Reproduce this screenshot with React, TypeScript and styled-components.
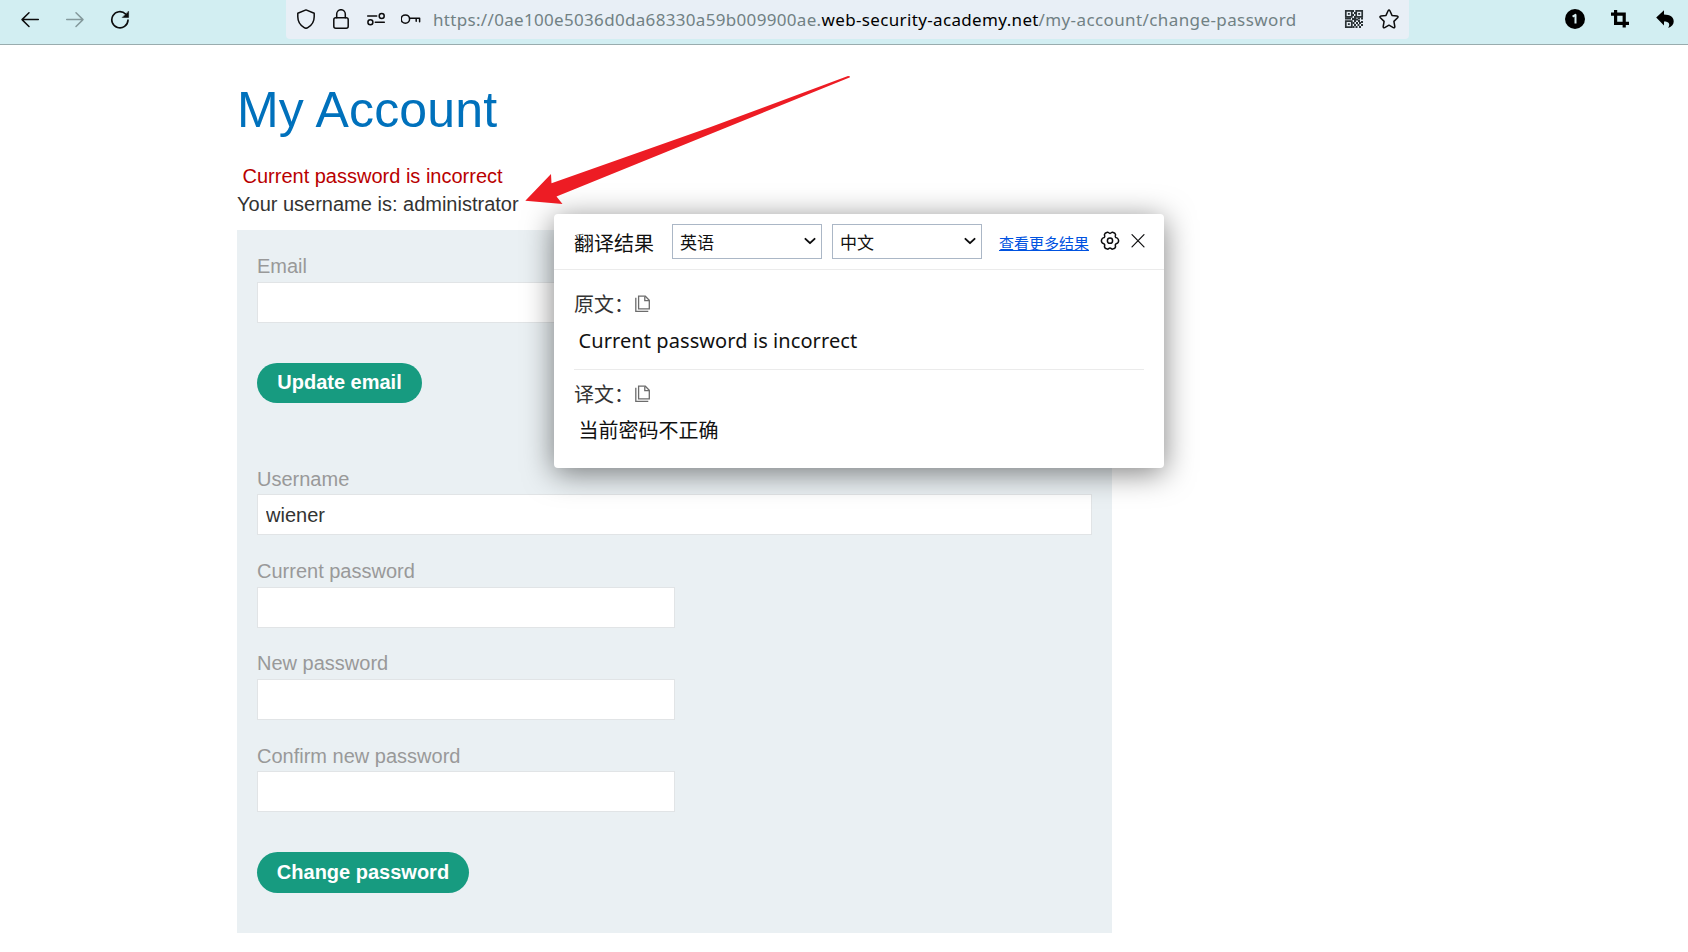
import React from "react";
import styled, { createGlobalStyle } from "styled-components";

const GlobalStyle = createGlobalStyle`
  * { box-sizing: border-box; }
  body {
    margin: 0;
    background: #fff;
    color: #333332;
    font-family: "Liberation Sans", Arial, sans-serif;
    font-size: 20px;
    line-height: 28px;
    overflow: hidden;
  }
`;

const Page = styled.div`
  position: relative;
  width: 1688px;
  height: 952px;
  overflow: hidden;
`;

const Toolbar = styled.header`
  display: flex;
  align-items: flex-start;
  height: 45px;
  background: #d2eef2;
  border-bottom: 1px solid #99acae;
`;

const NavButtons = styled.nav`
  display: flex;
  gap: 25px;
  width: 286px;
  padding: 10px 0 0 20px;
`;

const Icon = styled.svg<{ $dim?: boolean }>`
  display: block;
  flex: none;
  width: 20px;
  height: 20px;
  fill: none;
  stroke: ${(p) => (p.$dim ? "#84999c" : "#0c0c0d")};
  stroke-width: 1.5;
  stroke-linecap: round;
  stroke-linejoin: round;
`;

const CloseIcon = styled(Icon)`
  margin-left: 8px;
`;

const AddressBar = styled.div`
  display: flex;
  width: 1123px;
  height: 39px;
  padding: 9px 10px 0 10px;
  background: #e8eff6;
  border-radius: 0 0 4px 4px;
`;

const AddressIcons = styled.div`
  display: flex;
  gap: 15px;
  width: 137px;
`;

const Url = styled.div`
  display: flex;
  flex: 1;
  margin-top: -2px;
  font-family: "Noto Sans", sans-serif;
  font-size: 17px;
  line-height: 26px;
  white-space: nowrap;
`;

const UrlPart = styled.span<{ $strong?: boolean; $width: number; $tracking: number }>`
  width: ${(p) => p.$width}px;
  color: ${(p) => (p.$strong ? "#000" : "#718184")};
  letter-spacing: ${(p) => p.$tracking}px;
`;

const PageActions = styled.div`
  display: flex;
  gap: 15px;
`;

const Extensions = styled.div`
  display: flex;
  gap: 25px;
  margin-left: auto;
  padding: 9px 13px 0 0;
`;

const Main = styled.main`
  width: 875px;
  margin-left: 237px;
  padding-top: 35px;
`;

const Title = styled.h1`
  margin: 0 0 22px;
  color: #0071bc;
  font-size: 50px;
  font-weight: 400;
  line-height: 60px;
  letter-spacing: 0.2px;
`;

const Warning = styled.p`
  margin: 0;
  padding-left: 5.5px;
  color: #b90000;
`;

const UserLine = styled.p`
  margin: 0 0 12px;
`;

const Forms = styled.section`
  display: flex;
  flex-direction: column;
  height: 703px;
  padding: 22px 20px 40px;
  background: #eaf0f3;
`;

const Form = styled.form<{ $after?: number }>`
  margin: 0 0 ${(p) => p.$after ?? 0}px;
`;

const Field = styled.label<{ $gap: number; $after: number }>`
  display: flex;
  flex-direction: column;
  gap: ${(p) => p.$gap}px;
  margin-bottom: ${(p) => p.$after}px;
  color: #999;
`;

const Input = styled.input<{ $narrow?: boolean }>`
  width: ${(p) => (p.$narrow ? "418px" : "100%")};
  height: 41px;
  padding: 2px 8px 0;
  border: 1px solid #e1e4e6;
  border-radius: 0;
  outline: none;
  background: #fff;
  color: #333332;
  font: 20px "Liberation Sans", Arial, sans-serif;
`;

const Submit = styled.button<{ $width: number; $height: number }>`
  display: block;
  width: ${(p) => p.$width}px;
  height: ${(p) => p.$height}px;
  padding: 0 0 ${(p) => (p.$height > 40 ? 0 : 2)}px;
  border: 0;
  border-radius: 21px;
  background: #179b80;
  color: #fff;
  font: bold 20px "Liberation Sans", Arial, sans-serif;
`;

const Popup = styled.aside`
  position: absolute;
  left: 554px;
  top: 214px;
  width: 610px;
  height: 254px;
  border-radius: 4px;
  background: #fff;
  box-shadow: 0 5px 30px rgba(0, 0, 0, 0.5);
  color: #111;
  font-family: "Noto Sans", "Noto Sans CJK SC", sans-serif;
`;

const PopupHeader = styled.div`
  display: flex;
  align-items: center;
  height: 56px;
  padding: 0 16px 1px 20px;
  border-bottom: 1px solid #ebebeb;
  font-family: "Noto Sans CJK SC", sans-serif;
`;

const PopupTitle = styled.span`
  flex: none;
  width: 98px;
  margin-top: 4px;
  font-size: 20px;
`;

const Select = styled.div`
  display: flex;
  flex: none;
  align-items: center;
  justify-content: space-between;
  width: 150px;
  height: 35px;
  margin-right: 10px;
  padding: 0 1px 0 7px;
  border: 1px solid #abb7c6;
  font-size: 17px;
  line-height: 33px;
`;

const SelectValue = styled.span`
  padding-top: 1px;
`;

const MoreLink = styled.a`
  flex: none;
  margin: 4px 11px 0 7px;
  color: #0052e0;
  font-size: 15px;
  text-decoration: underline;
  white-space: nowrap;
`;

const PopupBody = styled.div`
  padding: 19px 20px 0;
`;

const Entry = styled.div<{ $divided?: boolean }>`
  height: ${(p) => (p.$divided ? 81 : 80)}px;
  margin-bottom: 9px;
  border-bottom: ${(p) => (p.$divided ? "1px solid #ebebeb" : "0")};
`;

const EntryLabel = styled.div`
  display: flex;
  align-items: center;
  height: 30px;
  color: #333;
  font-family: "Noto Sans CJK SC", sans-serif;
`;

const EntryLabelText = styled.span`
  width: 60px;
`;

const EntryText = styled.div<{ $tracking?: number }>`
  padding: 8px 0 0 4.5px;
  line-height: 28px;
  letter-spacing: ${(p) => p.$tracking ?? 0}px;
  white-space: nowrap;
`;

const Arrow = styled.svg`
  position: absolute;
  left: 520px;
  top: 70px;
  width: 336px;
  height: 140px;
  pointer-events: none;
`;

const CopyIcon = () => (
  <Icon viewBox="0 0 20 20">
    <g stroke="#6c6c6c" strokeWidth="1.3" strokeLinecap="butt" strokeLinejoin="miter">
      <path d="M4.6 2.2h6.7l4 4v8.6H4.600z" />
      <path d="M10.800 2.400v4.300h4.300M1.800 3.700v13.600h12.500" />
    </g>
  </Icon>
);

const Chevron = () => (
  <Icon viewBox="0 0 24 20">
    <path d="M6.500 7.400l5.500 5.200 5.500-5.200" strokeWidth="2.300" />
  </Icon>
);

const qrDots = [
  [8, 1], [8, 5], [10, 3], [10, 7], [1, 8.500], [3, 8.500], [5, 8.500], [8, 9], [10, 9], [12, 9.500], [14, 8.500], [17, 8.500],
  [10, 11], [14, 11], [17, 12], [8.500, 13], [12, 13], [15, 13],
  [10, 15], [13.500, 15], [17, 15], [8.500, 17], [11.500, 17], [15, 17],
];

export default function App() {
  return (
    <Page>
      <GlobalStyle />
      <Toolbar>
        <NavButtons>
          <Icon viewBox="0 0 20 20">
            <path d="M18.3 9.6H2M9 2.8L2 9.6l7 6.9" />
          </Icon>
          <Icon viewBox="0 0 20 20" $dim>
            <path d="M1.7 9.6H18M11 2.8l7 6.8-7 6.9" />
          </Icon>
          <Icon viewBox="0 0 20 20">
            <path d="M15.6 4A8.1 8.1 0 1 0 18 10.2" strokeWidth="1.7" />
            <path d="M18.6 1.4v6.1h-6.1z" fill="#0c0c0d" strokeWidth=".5" />
          </Icon>
        </NavButtons>
        <AddressBar>
          <AddressIcons>
            <Icon viewBox="0 0 20 20">
              <path d="M10 .9l8.2 3.4v3.5c0 5-3.2 9-6.4 10.9q-1.8 1.1-3.6 0C5 16.8 1.8 12.8 1.8 7.8V4.3z" />
            </Icon>
            <Icon viewBox="0 0 20 20">
              <rect x="2.8" y="8.8" width="14.4" height="10.4" rx="2" />
              <path d="M5.7 8.8V5a4.3 4.3 0 0 1 8.6 0v3.8" />
            </Icon>
            <Icon viewBox="0 0 20 20">
              <circle cx="15.7" cy="6.9" r="2.5" />
              <path d="M1.7 6.9h9M9.300 13.200h9" />
              <circle cx="4.400" cy="13.200" r="2.500" />
            </Icon>
            <Icon viewBox="0 0 20 20">
              <circle cx="4.400" cy="10.100" r="4.200" />
              <path d="M8.600 9.300h10v3.500M15.200 9.300v3" />
            </Icon>
          </AddressIcons>
          <Url>
            <UrlPart $width={388.5} $tracking={0.32}>https://0ae100e5036d0da68330a59b009900ae.</UrlPart>
            <UrlPart $width={217} $tracking={0.35} $strong>web-security-academy.net</UrlPart>
            <UrlPart $width={259} $tracking={0.4}>/my-account/change-password</UrlPart>
          </Url>
          <PageActions>
            <Icon viewBox="0 0 20 20">
              <g stroke="#2b3336" strokeWidth="1.700" strokeLinejoin="miter">
                <path d="M1.800 1.800h6v6h-6zM12.200 1.800h6v6h-6zM1.800 12.200h6v6h-6z" />
              </g>
              <g fill="#2b3336" stroke="none">
                <path d="M3.900 3.900h1.900v1.900H3.900zM14.200 3.900h1.900v1.900h-1.900zM3.900 14.200h1.900v1.900H3.900z" />
                {qrDots.map(([x, y]) => (
                  <rect key={`${x}-${y}`} x={x} y={y} width="2" height="2" />
                ))}
              </g>
            </Icon>
            <Icon viewBox="0 0 20 20">
              <path d="M9.100 1.800q.9-1.600 1.800 0l2.100 4.600 5 .7q1.800.3.600 1.700l-3.700 3.600.9 5.100q.2 1.800-1.500 1.100L10 16.200l-4.300 2.400q-1.700.7-1.500-1.100l.9-5.100-3.700-3.600Q.2 7.400 2 7.100l5-.7z" />
            </Icon>
          </PageActions>
        </AddressBar>
        <Extensions>
          <Icon viewBox="0 0 20 20">
            <circle cx="10" cy="10" r="10" fill="#000" stroke="none" />
            <path d="M7.600 7.600l2.900-1.700v8.700" stroke="#d8edf0" strokeWidth="2" strokeLinecap="butt" />
          </Icon>
          <Icon viewBox="0 0 20 20">
            <path d="M1 5.200h13.200V18.500M5.600 1v13.300H19" stroke="#000" strokeWidth="3.200" strokeLinecap="butt" strokeLinejoin="miter" />
          </Icon>
          <Icon viewBox="0 0 20 20">
            <path d="M9 1.200v4.400c6 .2 9.700 2.500 9.700 6.800 0 3-1.800 5.100-5.500 6.500 2.400-3.600.8-6.300-4.200-6.300v4L1.200 8.600z" fill="#000" stroke="none" />
          </Icon>
        </Extensions>
      </Toolbar>

      <Main>
        <Title>My Account</Title>
        <Warning>Current password is incorrect</Warning>
        <UserLine>Your username is: administrator</UserLine>
        <Forms>
          <Form $after={62}>
            <Field $gap={2} $after={40}>
              Email
              <Input />
            </Field>
            <Submit type="button" $width={165} $height={40}>Update email</Submit>
          </Form>
          <Form>
            <Field $gap={1} $after={22}>
              Username
              <Input defaultValue="wiener" />
            </Field>
            <Field $gap={2} $after={21}>
              Current password
              <Input type="password" $narrow />
            </Field>
            <Field $gap={2} $after={22}>
              New password
              <Input type="password" $narrow />
            </Field>
            <Field $gap={1} $after={40}>
              Confirm new password
              <Input type="password" $narrow />
            </Field>
            <Submit type="button" $width={212} $height={41}>Change password</Submit>
          </Form>
        </Forms>
      </Main>

      <Popup>
        <PopupHeader>
          <PopupTitle>翻译结果</PopupTitle>
          <Select><SelectValue>英语</SelectValue><Chevron /></Select>
          <Select><SelectValue>中文</SelectValue><Chevron /></Select>
          <MoreLink>查看更多结果</MoreLink>
          <Icon viewBox="0 0 20 20">
            <path
              d="M10 2.700C11.300 2.700 11.400 1.300 12.600 1.600C14.300 2 15.300 2.700 15.500 3.700C15.700 4.900 14.900 5.300 15.500 6.400C16.200 7.500 17.300 6.900 18 8.100C18.800 9.400 18.800 10.600 18 11.900C17.300 13.100 16.200 12.500 15.500 13.600C14.900 14.700 15.700 15.100 15.500 16.300C15.300 17.300 14.300 18 12.600 18.400C11.400 18.700 11.300 17.300 10 17.300C8.700 17.300 8.600 18.700 7.400 18.400C5.700 18 4.700 17.300 4.500 16.300C4.300 15.100 5.100 14.700 4.500 13.600C3.800 12.500 2.700 13.100 2 11.900C1.200 10.600 1.200 9.400 2 8.100C2.700 6.900 3.800 7.500 4.500 6.400C5.100 5.300 4.300 4.900 4.500 3.700C4.700 2.700 5.700 2 7.400 1.600C8.600 1.300 8.700 2.700 10 2.700Z"
              transform="translate(0 -.3)"
            />
            <circle cx="10" cy="9.700" r="2.600" />
          </Icon>
          <CloseIcon viewBox="0 0 20 20">
            <path d="M4 3.600L16 15.800M16 3.600L4 15.800" strokeWidth="1.200" />
          </CloseIcon>
        </PopupHeader>
        <PopupBody>
          <Entry $divided>
            <EntryLabel><EntryLabelText>原文：</EntryLabelText><CopyIcon /></EntryLabel>
            <EntryText $tracking={0.08}>Current password is incorrect</EntryText>
          </Entry>
          <Entry>
            <EntryLabel><EntryLabelText>译文：</EntryLabelText><CopyIcon /></EntryLabel>
            <EntryText>当前密码不正确</EntryText>
          </Entry>
        </PopupBody>
      </Popup>

      <Arrow viewBox="520 70 336 140">
        <path d="M525.300 200.700L551 174l.500 9.300L710 127.300 848 75.900q3 0 1.500 1.700L666.700 151.700 556.500 196.500l6 7.500z" fill="#ed1c24" />
      </Arrow>
    </Page>
  );
}
